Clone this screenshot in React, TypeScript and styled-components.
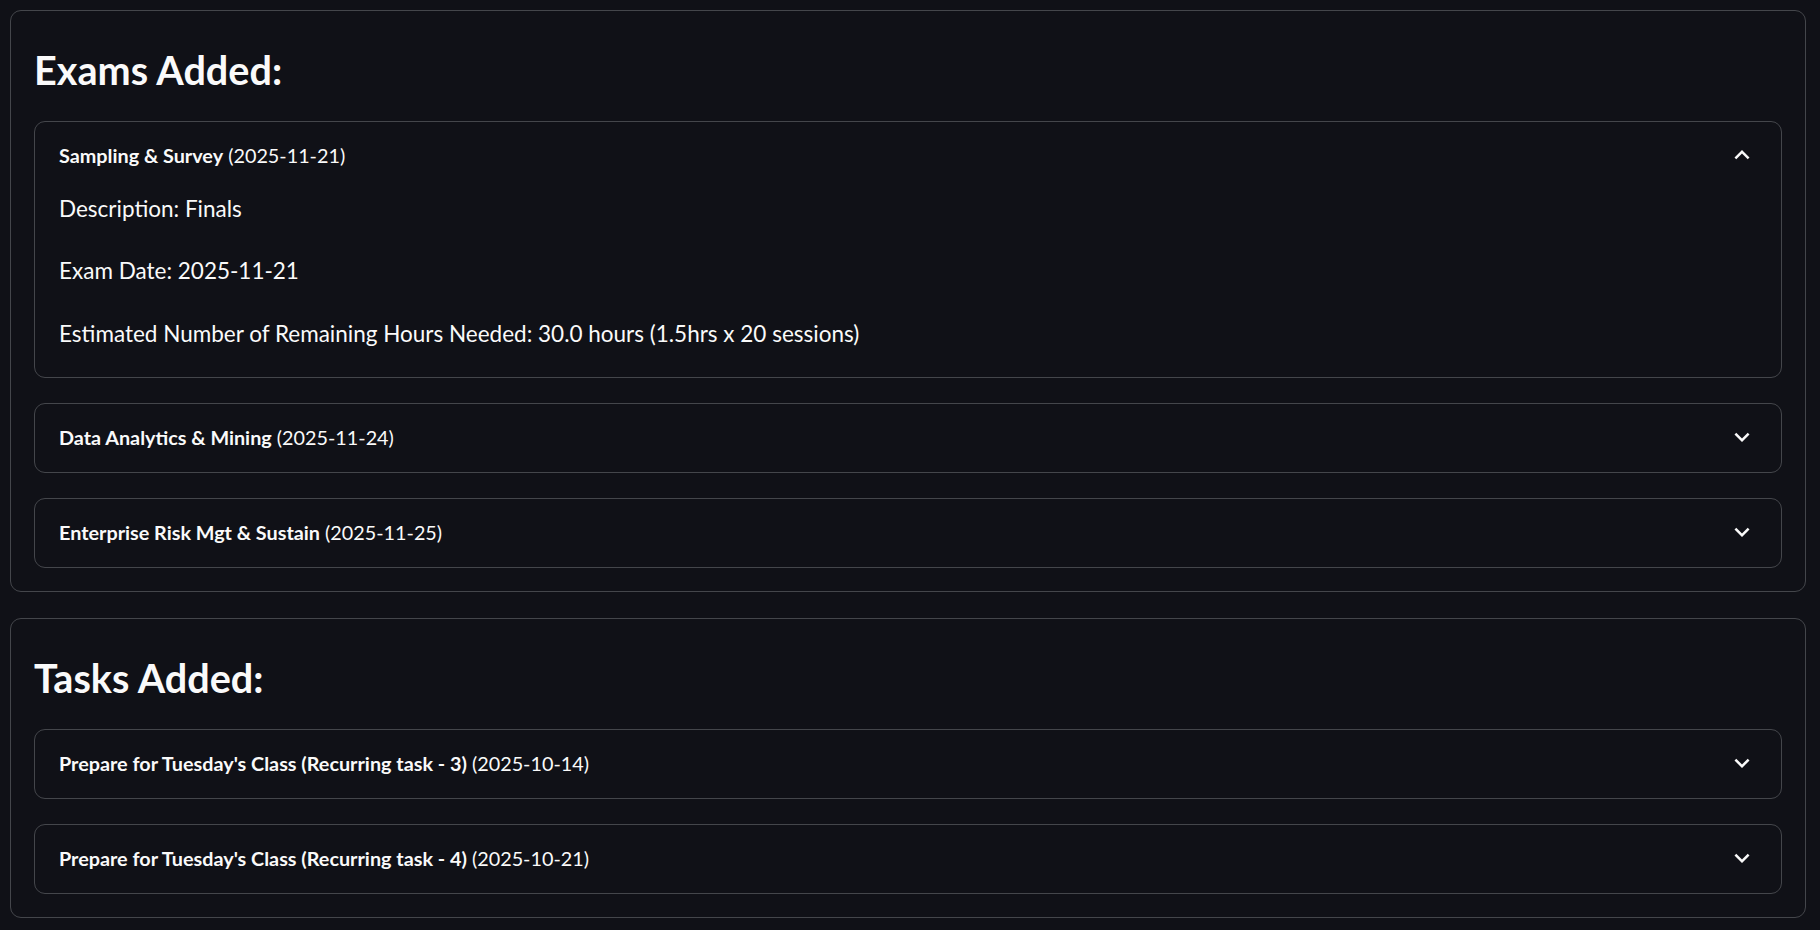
import React, { useState } from "react";
import styled, { createGlobalStyle } from "styled-components";

const GlobalStyle = createGlobalStyle`
  html, body {
    margin: 0;
    padding: 0;
    background: #101117;
  }
  body {
    font-family: Lato, "Noto Sans", sans-serif;
    color: #fafafa;
  }
  * { box-sizing: border-box; }
`;

const Page = styled.main`
  display: flex;
  flex-direction: column;
  gap: 26px;
  padding: 10px 14px 9px 10px;
  background: #101117;
`;

const Section = styled.section`
  border: 1px solid #44464b;
  border-radius: 11px;
  padding: 23px;
`;

const SectionTitle = styled.h3`
  margin: 0 0 25px 0;
  padding-top: 10px;
  font-size: 39.6px;
  line-height: 52px;
  font-weight: 700;
  color: #fafafa;
`;

const List = styled.div`
  display: flex;
  flex-direction: column;
  gap: 25px;
`;

const Card = styled.div`
  border: 1px solid #44464b;
  border-radius: 11px;
`;

const Header = styled.button`
  display: flex;
  align-items: center;
  justify-content: space-between;
  width: 100%;
  height: 68px;
  padding: 0 24px 2px;
  background: transparent;
  border: none;
  color: #fafafa;
  font-family: inherit;
  font-size: 19.8px;
  cursor: pointer;
  text-align: left;
`;

const Label = styled.span`
  font-weight: 400;
  strong { font-weight: 700; }
`;

const Body = styled.div`
  display: flex;
  flex-direction: column;
  gap: 24px;
  padding: 0 24px 24px;
`;

const Para = styled.p`
  margin: 0;
  font-size: 22.5px;
  line-height: 38.4px;
`;

const Chevron = ({ up }: { up: boolean }) => (
  <svg width="30" height="30" viewBox="0 0 24 24" fill="#fafafa" aria-hidden>
    {up ? (
      <path d="M12 8l-6 6 1.41 1.41L12 10.83l4.59 4.58L18 14z" />
    ) : (
      <path d="M16.59 8.59L12 13.17 7.41 8.59 6 10l6 6 6-6z" />
    )}
  </svg>
);

type Item = { name: string; date: string; body?: string[] };

const Expander = ({ item, initiallyOpen }: { item: Item; initiallyOpen?: boolean }) => {
  const [open, setOpen] = useState(!!initiallyOpen);
  return (
    <Card>
      <Header onClick={() => setOpen(!open)}>
        <Label>
          <strong>{item.name}</strong> ({item.date})
        </Label>
        <Chevron up={open} />
      </Header>
      {open && item.body && (
        <Body>
          {item.body.map((t) => (
            <Para key={t}>{t}</Para>
          ))}
        </Body>
      )}
    </Card>
  );
};

const exams: Item[] = [
  {
    name: "Sampling & Survey",
    date: "2025-11-21",
    body: [
      "Description: Finals",
      "Exam Date: 2025-11-21",
      "Estimated Number of Remaining Hours Needed: 30.0 hours (1.5hrs x 20 sessions)",
    ],
  },
  { name: "Data Analytics & Mining", date: "2025-11-24", body: [] },
  { name: "Enterprise Risk Mgt & Sustain", date: "2025-11-25", body: [] },
];

const tasks: Item[] = [
  { name: "Prepare for Tuesday's Class (Recurring task - 3)", date: "2025-10-14", body: [] },
  { name: "Prepare for Tuesday's Class (Recurring task - 4)", date: "2025-10-21", body: [] },
];

export default function App() {
  return (
    <>
      <GlobalStyle />
      <Page>
        <Section>
          <SectionTitle>Exams Added:</SectionTitle>
          <List>
            {exams.map((e, i) => (
              <Expander key={e.name} item={e} initiallyOpen={i === 0} />
            ))}
          </List>
        </Section>
        <Section>
          <SectionTitle>Tasks Added:</SectionTitle>
          <List>
            {tasks.map((t) => (
              <Expander key={t.name + t.date} item={t} />
            ))}
          </List>
        </Section>
      </Page>
    </>
  );
}
